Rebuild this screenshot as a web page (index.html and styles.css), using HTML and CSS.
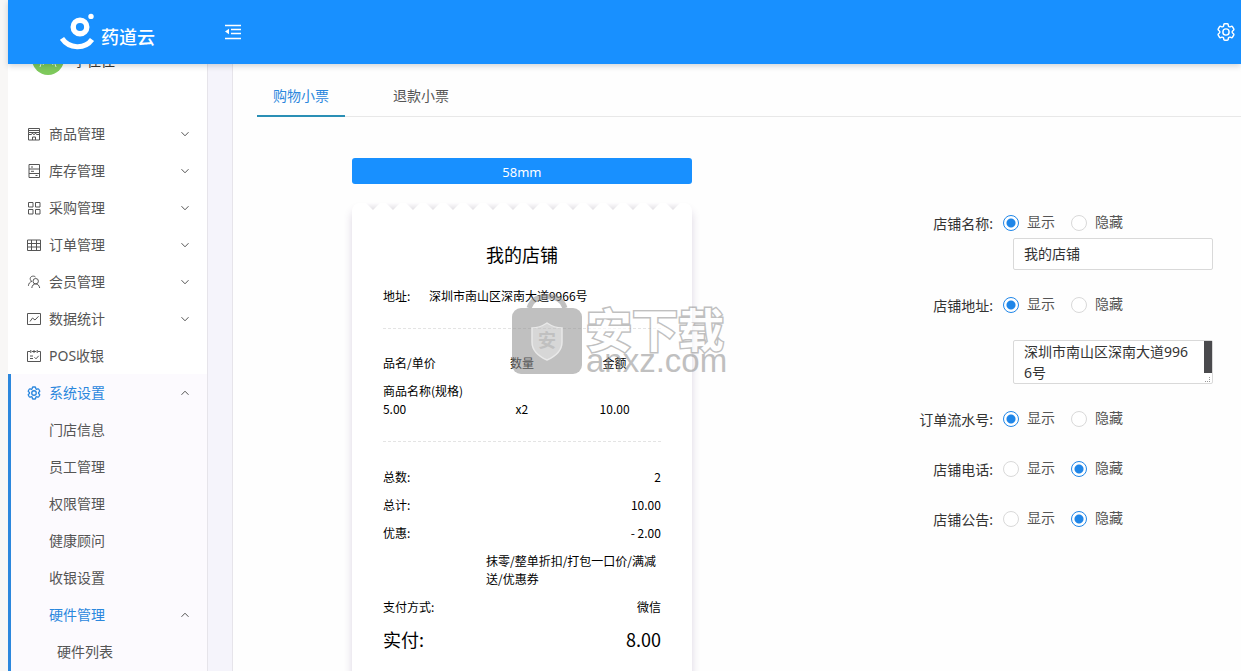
FILE: index.html
```html
<!DOCTYPE html>
<html lang="zh-CN">
<head>
<meta charset="utf-8">
<title>药道云</title>
<link rel="stylesheet" href="styles.css">
</head>
<body>
<svg class="defs" aria-hidden="true">
  <symbol id="gear" viewBox="0 0 24 24"><path d="M9.594 3.94c.09-.542.56-.94 1.11-.94h2.593c.55 0 1.02.398 1.11.94l.213 1.281c.063.374.313.686.645.87.074.04.147.083.22.127.325.196.72.257 1.075.124l1.217-.456a1.125 1.125 0 0 1 1.37.49l1.296 2.247a1.125 1.125 0 0 1-.26 1.431l-1.003.827c-.293.241-.438.613-.43.992a7.723 7.723 0 0 1 0 .255c-.008.378.137.75.43.991l1.004.827c.424.35.534.955.26 1.43l-1.298 2.247a1.125 1.125 0 0 1-1.369.491l-1.217-.456c-.355-.133-.75-.072-1.076.124a6.47 6.47 0 0 1-.22.128c-.331.183-.581.495-.644.869l-.213 1.281c-.09.543-.56.94-1.11.94h-2.594c-.55 0-1.019-.398-1.11-.94l-.213-1.281c-.062-.374-.312-.686-.644-.87a6.52 6.52 0 0 1-.22-.127c-.325-.196-.72-.257-1.076-.124l-1.217.456a1.125 1.125 0 0 1-1.369-.49l-1.297-2.247a1.125 1.125 0 0 1 .26-1.431l1.004-.827c.292-.24.437-.613.43-.991a6.932 6.932 0 0 1 0-.255c.007-.38-.138-.751-.43-.992l-1.004-.827a1.125 1.125 0 0 1-.26-1.43l1.297-2.247a1.125 1.125 0 0 1 1.37-.491l1.216.456c.356.133.751.072 1.076-.124.072-.044.146-.086.22-.128.332-.183.582-.495.644-.869l.214-1.28Z"/><circle cx="12" cy="12" r="3.4"/></symbol>
  <symbol id="down" viewBox="0 0 10 10"><path d="M1.5 3.2 5 6.800l3.500-3.600"/></symbol>
  <symbol id="up" viewBox="0 0 10 10"><path d="M1.5 6.800 5 3.200l3.500 3.600"/></symbol>
</svg>
<header class="topbar">
  <a class="brand" href="#">
    <svg class="brand-mark" viewBox="0 0 36 38" aria-hidden="true">
      <circle cx="20" cy="14" r="6.8" fill="none" stroke="#fff" stroke-width="5.400"/>
      <circle cx="31" cy="3.400" r="2.700" fill="#fff"/>
      <path d="M2 25.500C9 36 25 36.500 32 26.500" fill="none" stroke="#fff" stroke-width="5"/>
    </svg>
    <span class="brand-name">药道云</span>
  </a>
  <button class="icon-button" type="button" aria-label="收起菜单">
    <svg viewBox="0 0 16 16" width="16" height="16" aria-hidden="true"><path d="M0 1.500h16M6 5.500h10M6 9.500h10M0 14.500h16" stroke="#fff" stroke-width="1.300"/><path d="M0 7.500 4 4.700v5.600z" fill="#fff"/></svg>
  </button>
  <button class="icon-button icon-button-end" type="button" aria-label="设置">
    <svg class="line-icon" width="22" height="22" aria-hidden="true"><use href="#gear"/></svg>
  </button>
</header>
<div class="layout">
  <aside class="sidebar">
    <div class="profile">
      <svg class="avatar" viewBox="0 0 32 32" aria-hidden="true"><circle cx="16" cy="16" r="16" fill="#7ec95c"/><circle cx="16" cy="13" r="5" fill="none" stroke="#fff"/><path d="M10 18 8 24M13 18l-2 4M19 18l2 4M22 18l2 6" fill="none" stroke="#e8f6e0"/></svg>
      <span>李佳佳</span>
    </div>
    <nav>
      <ul class="menu">
        <li><button class="menu-row" type="button"><svg class="line-icon menu-icon" viewBox="0 0 16 16"><path d="M2.500 2.500h11v4h-11zM2.500 4.500h11M2.500 6.500v7.500h11V6.500M6.500 14v-3h3v3M2.500 8.500h3l1-1.500 1 1.500h1l1-1.500 1 1.500h3"/></svg>商品管理<svg class="arrow line-icon"><use href="#down"/></svg></button></li>
        <li><button class="menu-row" type="button"><svg class="line-icon menu-icon" viewBox="0 0 16 16"><path d="M3 1.500h10.500v13H3zM3 6h10.500M3 10.500h10.500M5 4h2M5 8.300h3M9.500 12.500h2"/></svg>库存管理<svg class="arrow line-icon"><use href="#down"/></svg></button></li>
        <li><button class="menu-row" type="button"><svg class="line-icon menu-icon" viewBox="0 0 16 16"><path d="M2.500 2.500H7V7H2.500zM9.500 2.500H14V7H9.500zM2.500 9.500H7V14H2.500zM9.500 9.500H14V14H9.500z"/></svg>采购管理<svg class="arrow line-icon"><use href="#down"/></svg></button></li>
        <li><button class="menu-row" type="button"><svg class="line-icon menu-icon" viewBox="0 0 16 16"><path d="M1.500 3h13v10.500h-13zM1.500 6.500h13M1.500 10h13M5.500 3v10.500M10.500 3v10.500"/></svg>订单管理<svg class="arrow line-icon"><use href="#down"/></svg></button></li>
        <li><button class="menu-row" type="button"><svg class="line-icon menu-icon" viewBox="0 0 16 16"><circle cx="9.700" cy="7.200" r="2.700"/><path d="M5.800 14c.3-2.500 1.800-4.100 3.900-4.100s3.600 1.600 4 4.100M9.500 3C8.500 1.700 4.400 1.600 4.200 4.600c0 1.300.6 2.200 1.700 2.800C3.700 8 2.600 9.600 2.400 11.800"/></svg>会员管理<svg class="arrow line-icon"><use href="#down"/></svg></button></li>
        <li><button class="menu-row" type="button"><svg class="line-icon menu-icon" viewBox="0 0 16 16"><path d="M1.500 2.500h13v11h-13zM4 10.500 6.500 7l2.500 2L12.500 5.300"/></svg>数据统计<svg class="arrow line-icon"><use href="#down"/></svg></button></li>
        <li><a class="menu-row" href="#"><svg class="line-icon menu-icon" viewBox="0 0 16 16"><path d="M4 3.500H1.500v10h13v-10H12M5.800 3.500h4.400M4.800 2v3M8 2v3M11.200 2v3M4 8h3M4 10.500h3M8.500 9.300l1.500 1.500 2.700-3"/></svg>POS收银</a></li>
        <li class="open">
          <button class="menu-row current" type="button" aria-expanded="true"><svg class="line-icon menu-icon"><use href="#gear"/></svg>系统设置<svg class="arrow line-icon"><use href="#up"/></svg></button>
          <ul class="submenu">
            <li><a class="menu-row" href="#">门店信息</a></li>
            <li><a class="menu-row" href="#">员工管理</a></li>
            <li><a class="menu-row" href="#">权限管理</a></li>
            <li><a class="menu-row" href="#">健康顾问</a></li>
            <li><a class="menu-row" href="#">收银设置</a></li>
            <li><button class="menu-row current" type="button" aria-expanded="true">硬件管理<svg class="arrow line-icon"><use href="#up"/></svg></button>
              <ul><li><a class="menu-row deep" href="#">硬件列表</a></li></ul>
            </li>
          </ul>
        </li>
      </ul>
    </nav>
  </aside>
  <main class="page">
    <div class="tabs" role="tablist">
      <button class="tab selected" type="button" role="tab" aria-selected="true">购物小票</button>
      <button class="tab" type="button" role="tab" aria-selected="false">退款小票</button>
    </div>
    <div class="content">
      <section class="preview">
        <button class="size-button" type="button">58mm</button>
        <div class="receipt">
          <svg class="teeth" aria-hidden="true">
            <defs>
              <linearGradient id="shade" x1="0" y1="0" x2="0" y2="1"><stop offset="0" stop-color="#fdfcfe"/><stop offset="1" stop-color="#e2e0e4"/></linearGradient>
              <pattern id="tooth" width="20" height="8" patternUnits="userSpaceOnUse"><path d="M4 0h14l-7 7z" fill="url(#shade)"/></pattern>
            </defs>
            <rect width="100%" height="8" fill="url(#tooth)"/>
          </svg>
          <h1 class="shop-name">我的店铺</h1>
          <p class="address"><span>地址:</span><span>深圳市南山区深南大道9966号</span></p>
          <table class="goods">
            <thead><tr><th>品名/单价</th><th>数量</th><th>金额</th></tr></thead>
            <tbody>
              <tr><td colspan="3">商品名称(规格)</td></tr>
              <tr><td>5.00</td><td>x2</td><td>10.00</td></tr>
            </tbody>
          </table>
          <dl class="totals">
            <div><dt>总数:</dt><dd>2</dd></div>
            <div><dt>总计:</dt><dd>10.00</dd></div>
            <div><dt>优惠:</dt><dd>- 2.00</dd></div>
            <div><dd class="note">抹零/整单折扣/打包一口价/满减送/优惠券</dd></div>
            <div><dt>支付方式:</dt><dd>微信</dd></div>
            <div class="paid"><dt>实付:</dt><dd>8.00</dd></div>
          </dl>
          <div class="watermark" aria-hidden="true">
            <svg class="lock" viewBox="0 0 70 80">
              <path d="M17 14C20 4 28 2.500 35 2.500S50 4 53 14" fill="none" stroke="#8f8f8f" stroke-width="5"/>
              <path fill="#8f8f8f" d="M9 14h52a9 9 0 0 1 9 9v48a9 9 0 0 1-9 9H9a9 9 0 0 1-9-9V23a9 9 0 0 1 9-9z"/>
              <path fill="#b8b8b8" stroke="#d8d8d8" stroke-width="1.500" d="M35 29c6 4 10 5 15 5v14c0 8-6 14-15 18-9-4-15-10-15-18V34c5 0 9-1 15-5z"/>
              <text x="35" y="53" text-anchor="middle" class="lock-text">安</text>
            </svg>
            <div class="mark-words"><span class="mark-name">安下载</span><span class="mark-site">anxz.com</span></div>
          </div>
        </div>
      </section>
      <form class="settings">
        <span class="label" id="l1">店铺名称:</span>
        <div class="field">
          <div class="radios" role="radiogroup" aria-labelledby="l1"><label><input type="radio" name="name" checked>显示</label><label><input type="radio" name="name">隐藏</label></div>
          <input class="text" type="text" aria-labelledby="l1" value="我的店铺">
        </div>
        <span class="label" id="l2">店铺地址:</span>
        <div class="field">
          <div class="radios" role="radiogroup" aria-labelledby="l2"><label><input type="radio" name="addr" checked>显示</label><label><input type="radio" name="addr">隐藏</label></div>
          <div class="area-box">
            <textarea class="text area" aria-labelledby="l2">深圳市南山区深南大道9966号</textarea>
            <span class="area-thumb"></span>
          </div>
        </div>
        <span class="label" id="l3">订单流水号:</span>
        <div class="field">
          <div class="radios" role="radiogroup" aria-labelledby="l3"><label><input type="radio" name="serial" checked>显示</label><label><input type="radio" name="serial">隐藏</label></div>
        </div>
        <span class="label" id="l4">店铺电话:</span>
        <div class="field">
          <div class="radios" role="radiogroup" aria-labelledby="l4"><label><input type="radio" name="phone">显示</label><label><input type="radio" name="phone" checked>隐藏</label></div>
        </div>
        <span class="label" id="l5">店铺公告:</span>
        <div class="field">
          <div class="radios" role="radiogroup" aria-labelledby="l5"><label><input type="radio" name="notice">显示</label><label><input type="radio" name="notice" checked>隐藏</label></div>
        </div>
      </form>
    </div>
  </main>
</div>
</body>
</html>
```
FILE: styles.css
```css
* { box-sizing: border-box; }
body {
  margin: 0;
  padding-left: 8px;
  height: 100vh;
  display: flex;
  flex-direction: column;
  overflow: hidden;
  background: #f8f7f6;
  color: #333;
  font: 14px/20px "Noto Sans", "Noto Sans CJK SC", sans-serif;
}
button, input, textarea { font: inherit; color: inherit; }
button { border: 0; padding: 0; background: none; }
a { color: inherit; text-decoration: none; }
ul { list-style: none; margin: 0; padding: 0; }
.defs { display: none; }
.line-icon { fill: none; stroke: currentColor; stroke-width: 1; overflow: visible; }

.topbar {
  flex: none;
  height: 64px;
  display: flex;
  align-items: center;
  padding: 0 4px 0 52px;
  background: #1890ff;
  color: #fff;
  z-index: 2;
  box-shadow: 0 2px 6px rgba(0, 20, 40, .18);
}
.brand { display: flex; align-items: center; gap: 5px; width: 165px; }
.brand-mark { width: 36px; height: 38px; }
.brand-name { padding-top: 10px; font-size: 18px; font-weight: 500; }
.icon-button { display: flex; }
.icon-button-end { margin-left: auto; }
.icon-button-end .line-icon { stroke-width: 1.6; }

.layout { flex: 1; min-height: 0; display: flex; overflow: hidden; background: #f5f4fb; }
.sidebar {
  width: 200px;
  flex: none;
  background: #fff;
  border-right: 1px solid #e6e4ea;
  overflow: hidden;
}
.profile {
  height: 72px;
  margin-top: -21px;
  padding: 0 24px;
  display: flex;
  align-items: flex-start;
  gap: 9px;
}
.profile span { padding-top: 8px; color: #333; }
.avatar { width: 32px; height: 32px; }
.menu-row {
  width: 100%;
  height: 37px;
  display: flex;
  align-items: center;
  padding: 0 17px 0 18px;
  color: #555;
}
.menu-icon { width: 16px; height: 16px; margin-right: 7px; }
.arrow { width: 10px; height: 10px; margin-left: auto; color: #555; }
.menu-row.current { color: #2b87dd; }
.current .menu-icon { stroke-width: 2; }
.open { background: #fcfafe; border-left: 3px solid #2b87dd; padding-bottom: 37px; }
.open .menu-row { padding-left: 15px; }
.open .submenu .menu-row { padding-left: 38px; }
.open .submenu .deep { padding-left: 46px; }

.page {
  flex: 1;
  min-width: 0;
  margin-left: 24px;
  padding-left: 24px;
  background: #fefefe;
  border-left: 1px solid #e6e4ea;
}
.tabs { display: flex; gap: 32px; padding-top: 12px; border-bottom: 1px solid #e8e8e8; }
.tab { height: 41px; padding: 0 16px; margin-bottom: -1px; color: #555; border-bottom: 2px solid transparent; }
.tab.selected { color: #2b87dd; border-color: #2a8fb5; }

.content { display: grid; grid-template-columns: 7fr 6fr; }
.preview { display: flex; flex-direction: column; align-items: center; padding-top: 41px; }
.size-button {
  width: 340px;
  height: 26px;
  padding-top: 2px;
  border-radius: 3px;
  background: #1890ff;
  color: #fff;
  font-size: 13px;
}
.receipt {
  position: relative;
  width: 340px;
  margin-top: 19px;
  padding: 0 31px 60px;
  border-radius: 8px;
  background: #fff;
  box-shadow: 0 7px 8px rgba(80, 50, 110, .2);
  color: #000;
  font: 12px/18px "Noto Sans CJK SC", sans-serif;
}
.teeth { display: block; width: 320px; height: 8px; margin-left: -21px; }
.shop-name { margin: 29px 0 19px; font-size: 18px; line-height: 28px; font-weight: 400; text-align: center; }
.address { display: flex; gap: 16px; margin: 0; padding-bottom: 23px; border-bottom: 1px dashed #e4e4e4; }
.address span:first-child { width: 30px; }
.goods { width: 100%; table-layout: fixed; border-collapse: collapse; margin-top: 25px; }
.goods th, .goods td { padding: 0; font-weight: 400; text-align: center; }
.goods th:first-child, .goods td:first-child { text-align: left; }
.goods th { padding-bottom: 10px; }
.totals { margin: 23px 0 0; padding-top: 26px; border-top: 1px dashed #e4e4e4; display: grid; gap: 10px; }
.totals div { display: flex; justify-content: space-between; }
.totals dd { margin: 0; }
.totals .note { width: 175px; margin-left: auto; }
.totals .paid { font-size: 18px; line-height: 26px; }

.watermark {
  position: absolute;
  left: 160px;
  top: 91px;
  display: flex;
  gap: 4px;
  opacity: .56;
  white-space: nowrap;
}
.lock { width: 70px; height: 80px; }
.lock-text { font-size: 18px; font-weight: 700; fill: #8f8f8f; }
.mark-words { display: flex; flex-direction: column; padding-top: 12px; color: #8f8f8f; }
.mark-name {
  font: 700 46px/42px "Noto Sans CJK SC", sans-serif;
  color: #fff;
  -webkit-text-stroke: 3px #8f8f8f;
  paint-order: stroke fill;
}
.mark-site { font: 33px/26px "Liberation Sans", sans-serif; }

.settings {
  display: grid;
  grid-template-columns: 10fr 11fr;
  align-content: start;
  row-gap: 29px;
  padding-top: 96px;
}
.label { text-align: right; padding: 1px 10px 0 0; }
.radios { display: flex; gap: 16px; height: 20px; }
.radios label { display: flex; gap: 8px; color: #555; line-height: 18px; }
.radios input {
  appearance: none;
  width: 16px;
  height: 16px;
  margin: 2px 0 0;
  border: 1px solid #d9d9d9;
  border-radius: 50%;
  background: #fff;
}
.radios input:checked { border-color: #1f86e8; background: radial-gradient(circle, #1f86e8 4px, #fff 5px); }
.text {
  display: block;
  width: 200px;
  height: 32px;
  margin: 5px 0 -4px 10px;
  padding: 3px 10px 5px;
  border: 1px solid #d9d9d9;
  border-radius: 2px;
  background: #fff;
}
.area-box { position: relative; width: 200px; margin: 25px 0 -4px 10px; }
.area {
  height: 44px;
  margin: 0;
  padding: 0 20px 0 10px;
  line-height: 21px;
  word-break: break-all;
  resize: none;
  overflow: hidden;
}
.area-thumb {
  position: absolute;
  top: 1px;
  right: 1px;
  width: 8px;
  height: 32px;
  background: #4a4a4d;
}
.area-box::after {
  content: "";
  position: absolute;
  right: 3px;
  bottom: 2px;
  width: 4px;
  height: 4px;
  border: dotted #999;
  border-width: 0 1px 1px 0;
}
```
